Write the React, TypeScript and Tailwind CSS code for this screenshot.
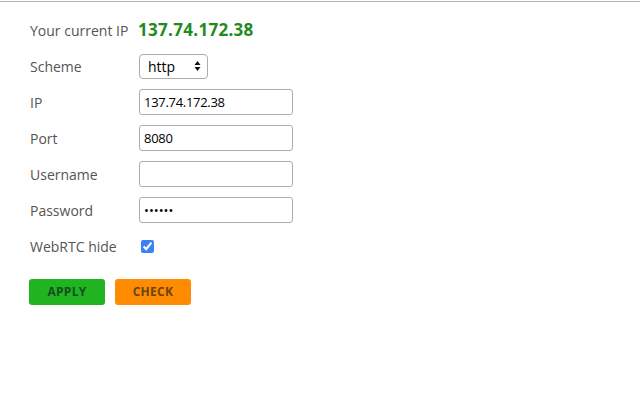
import { useState } from 'react';

const label = 'w-[109px] shrink-0 text-[14px] text-[#555]';
const inputCls =
  'h-[26px] w-[154px] rounded-[3px] border border-[#a4b0a4] px-[4px] text-[13px] tracking-[-0.3px] text-black outline-none';

const Row = ({ name, children }: { name: string; children: React.ReactNode }) => (
  <div className="flex h-[26px] items-center">
    <span className={label}>{name}</span>
    {children}
  </div>
);

export default function App() {
  const [hide, setHide] = useState(true);

  return (
    <div className="min-h-[400px] w-[640px] bg-white font-['Open_Sans',sans-serif]">
      <div className="mt-px h-px w-full bg-[#b0b0b0]" />
      <div className="flex flex-col gap-[10px] px-[30px] pt-[15px]">
        <div className="flex h-[26px] items-center">
          <span className={label}>Your current IP</span>
          <span className="-ml-px text-[17px] font-bold tracking-[0.3px] text-[#1f8a1f]">137.74.172.38</span>
        </div>
        <Row name="Scheme">
          <div className="flex h-[25px] w-[69px] items-center justify-between rounded-[4px] border border-[#a4b0a4] pl-[8px] pr-[6px] text-[14px] text-black">
            <span>http</span>
            <svg width="7" height="12" viewBox="0 0 7 12">
              <path d="M3.5 1 L6.5 5 L0.5 5 Z" fill="#111" />
              <path d="M3.5 11 L6.5 7 L0.5 7 Z" fill="#111" />
            </svg>
          </div>
        </Row>
        <Row name="IP">
          <input className={inputCls} defaultValue="137.74.172.38" />
        </Row>
        <Row name="Port">
          <input className={inputCls} defaultValue="8080" />
        </Row>
        <Row name="Username">
          <input className={inputCls} defaultValue="" />
        </Row>
        <Row name="Password">
          <input type="password" className={`${inputCls} text-[9px] tracking-[0px]`} defaultValue="secret" />
        </Row>
        <Row name="WebRTC hide">
          <input
            type="checkbox"
            checked={hide}
            onChange={() => setHide(!hide)}
            className="ml-[2px] h-[13px] w-[13px] accent-[#3b82f6]"
          />
        </Row>
        <div className="mt-[10px] flex gap-[10px]">
          <button className="-ml-px h-[26px] w-[76px] rounded-[3px] bg-[#21b421] text-[12px] font-bold tracking-[0.3px] text-[#13501a]">
            APPLY
          </button>
          <button className="h-[26px] w-[76px] rounded-[3px] bg-[#ff8c00] text-[12px] font-bold tracking-[0.3px] text-[#6e4210]">
            CHECK
          </button>
        </div>
      </div>
    </div>
  );
}
